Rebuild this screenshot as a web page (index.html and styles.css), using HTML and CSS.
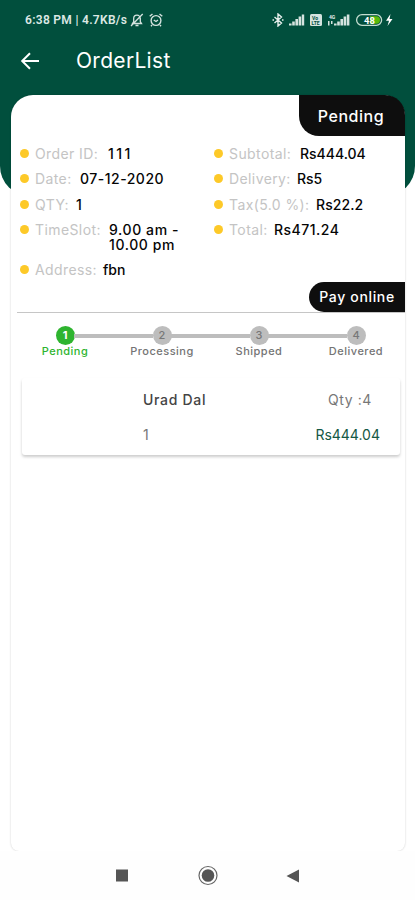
FILE: index.html
```html
<!DOCTYPE html>
<html lang="en">
<head>
<meta charset="utf-8">
<title>OrderList</title>
<link rel="stylesheet" href="styles.css">
</head>
<body>
<div class="screen">
  <header class="header">
    <div class="status">
      <span class="status-text">6:38 PM | 4.7KB/s</span>
      <svg class="ic-mute" width="14" height="14" viewBox="0 0 14 14" fill="none" stroke="#d5e3df" stroke-width="1.300"><path d="M2.5 10.500h9L10.300 8.700V5.500a3.300 3.300 0 0 0-6.600 0v3.200zM5.500 12.500h3M12.700 1 1 13"/></svg>
      <svg class="ic-alarm" width="14" height="14" viewBox="0 0 14 14" fill="none" stroke="#d5e3df" stroke-width="1.400"><circle cx="7" cy="7.500" r="4.900"/><path d="M.7 3.300 3.500 1M13.300 3.300 10.500 1M4.800 7 7 8.500 9 7M3 12l-1 1.300M11 12l1 1.300"/></svg>
      <svg class="ic-system" width="124" height="14" viewBox="0 0 124 14">
        <path d="M2.500 4l7 6-3.500 3V1l3.500 3-7 6M.5 7h1.500M10 7h1.500" fill="none" stroke="#e6efec" stroke-width="1.400"/>
        <g fill="#d5e3df"><path d="M17 10.500h2.600v2H17zM20.200 8.500h2.600v4h-2.600zM23.400 6h2.600v6.500h-2.600zM26.600 3.500h2.600v9h-2.600zM29.800 1.500h2.400v11h-2.400z"/><rect x="38" y="1" width="12" height="12" rx="1.500"/><path d="M62 10.500h2.600v2H62zM65.200 8.500h2.600v4h-2.600zM68.400 6H71v6.500h-2.600zM71.600 3.500h2.600v9h-2.600zM74.800 1.500h2.600v11h-2.600zM56 8h1.500v4.500H56zM59 8h1.500v3H59z"/></g>
        <text x="40" y="6.500" class="micro dark">Vo</text><text x="39.500" y="11.800" class="micro dark">LTE</text>
        <text x="57" y="5.500" class="micro light">4G</text>
        <rect x="84.600" y="1.600" width="25" height="10.800" rx="5.400" fill="none" stroke="#c3dccf" stroke-width="1.300"/>
        <path d="M98 3.300h6.300a3.700 3.700 0 0 1 0 7.400H98z" fill="#58b90a"/>
        <text x="92" y="10.500" class="battery">48</text>
        <path d="M118.500 1 114 7.700h3L115.500 13l5-7h-3z" fill="#fff"/>
      </svg>
    </div>
    <div class="appbar">
      <svg width="20" height="18" viewBox="0 0 20 18" fill="none" stroke="#fff" stroke-width="2"><path d="M10 1.200 2.200 9l7.800 7.800M2.200 9H19"/></svg>
      <h1>OrderList</h1>
    </div>
  </header>

  <main class="card">
    <div class="badge"><span>Pending</span></div>
    <section class="details">
      <ul>
        <li><i></i><span class="label l-id">Order ID:</span><b class="v-id">111</b></li>
        <li><i></i><span class="label l-date">Date:</span><b class="v-date">07-12-2020</b></li>
        <li><i></i><span class="label l-qty">QTY:</span><b>1</b></li>
        <li class="two"><i></i><span class="label l-slot">TimeSlot:</span><b class="v-slot"><span>9.00 am -</span><span>10.00 pm</span></b></li>
        <li><i></i><span class="label l-address">Address:</span><b class="v-address">fbn</b></li>
      </ul>
      <ul>
        <li><i></i><span class="label l-sub">Subtotal:</span><b class="v-sub">Rs444.04</b></li>
        <li><i></i><span class="label l-del">Delivery:</span><b class="v-del">Rs5</b></li>
        <li><i></i><span class="label l-tax">Tax(5.0 %):</span><b class="v-tax">Rs22.2</b></li>
        <li><i></i><span class="label l-total">Total:</span><b class="v-total">Rs471.24</b></li>
      </ul>
    </section>
    <div class="payment"><span class="pay">Pay online</span></div>
    <ol class="steps">
      <li class="active"><em>1</em><span class="s1">Pending</span></li>
      <li><em>2</em><span class="s2">Processing</span></li>
      <li><em>3</em><span class="s3">Shipped</span></li>
      <li><em>4</em><span class="s4">Delivered</span></li>
    </ol>
    <article class="item">
      <span class="name">Urad Dal</span><span class="qty">Qty :4</span>
      <span class="count">1</span><span class="price">Rs444.04</span>
    </article>
  </main>

  <nav class="nav">
    <svg width="415" height="49" viewBox="0 0 415 49"><path d="M116 18.500h12v12h-12zM299 18.500v13l-12.500-6.500z" fill="#555"/><circle cx="208" cy="24.500" r="9" fill="none" stroke="#666" stroke-width="1.200"/><circle cx="208" cy="24.500" r="6.300" fill="#555"/></svg>
  </nav>
</div>
</body>
</html>
```
FILE: styles.css
```css
* { box-sizing: border-box; }
body { margin: 0; background: #fff; font-family: Inter, "Liberation Sans", sans-serif; }
ul, ol { list-style: none; margin: 0; padding: 0; }
.screen { width: 415px; height: 900px; overflow: hidden; display: flex; flex-direction: column; }
.header { height: 196px; flex: none; background: #014f3d; border-radius: 0 0 30px 30px; }
.status { height: 40px; padding: 0 19px 0 25px; display: flex; align-items: center; }
.status-text { font: 600 12px/14px Roboto, sans-serif; letter-spacing: .3px; color: #dce8e4; width: 105px; white-space: nowrap; }
.ic-alarm { margin-left: 5px; }
.ic-system { margin-left: auto; }
.micro { font: 700 5px Roboto, sans-serif; }
.dark { fill: #014f3d; }
.light { fill: #e3edea; }
.battery { font: 700 9.500px Roboto, sans-serif; fill: #fff; }
.appbar { height: 42px; padding-left: 20px; display: flex; align-items: center; }
.appbar h1 { margin: 0 0 0 36px; font-size: 21px; font-weight: 400; line-height: 24px; letter-spacing: .3px; color: #fff; }
.card { width: 394px; height: 756px; flex: none; margin: -101px 0 0 11px; background: #fff; border-radius: 22px 22px 8px 8px; box-shadow: 0 0 2px rgba(0,0,0,.22); clip-path: inset(-3px -3px 0 -3px); }
.badge { width: 106px; height: 41px; margin-left: auto; padding-right: 2px; border-radius: 0 20px 0 20px; background: #0e0e0e; color: #fff; font-size: 16px; font-weight: 500; letter-spacing: .55px; line-height: 42px; text-align: center; }
.details { display: grid; grid-template-columns: 194px 1fr; padding: 5px 0 0 9px; height: 146px; }
.details li { height: 25.300px; display: flex; align-items: flex-start; font-size: 14px; line-height: 25px; white-space: nowrap; }
.details li.two { height: 40.500px; }
.details i { width: 9px; height: 9px; margin: 8px 6px 0 0; border-radius: 50%; background: #fdc928; }
.label { color: #c4c4c4; font-weight: 400; flex: none; letter-spacing: .4px; }
.details b { font-weight: 500; color: #050505; }
.details .v-slot { line-height: 15px; padding-top: 5px; letter-spacing: .6px; }
.v-slot span { display: block; height: 15px; line-height: 15px; }
.details .v-id { letter-spacing: 2.400px; }
.details .v-date { letter-spacing: .5px; }
.details .v-tax { letter-spacing: .1px; }
.details .v-total { letter-spacing: .5px; }
.l-id { width: 73px; } .l-date { width: 45px; } .l-qty { width: 41px; } .l-slot { width: 74px; } .l-address { width: 68px; }
.l-sub { width: 71px; } .l-del { width: 68px; } .l-tax { width: 87px; } .l-total { width: 45px; }
.payment { height: 31px; margin-left: 6px; border-bottom: 1px solid #c6c6c6; display: flex; justify-content: flex-end; }
.pay { width: 96px; height: 30px; border-radius: 15px 0 0 15px; background: #0e0e0e; color: #fff; font-size: 14px; font-weight: 500; letter-spacing: .65px; line-height: 30px; text-align: center; }
.steps { display: grid; grid-template-columns: repeat(4, 97px); margin: 13px 0 0 5.500px; height: 38px; }
.steps li { display: flex; flex-direction: column; align-items: center; font-size: 11px; font-weight: 500; letter-spacing: .5px; line-height: 13px; color: #747474; position: relative; }
.steps li + li::before { content: ""; position: absolute; width: 79px; height: 4px; left: -40px; top: 8px; background: #bdbdbd; }
.steps em { width: 19px; height: 19px; border-radius: 50%; background: #bdbdbd; font-style: normal; line-height: 19px; letter-spacing: 0; font-size: 11px; text-align: center; color: #777; }
.steps .active { color: #2eb42f; }
.steps .active em { background: #2eb42f; color: #fff; font-weight: 700; }
.item { width: 378px; height: 77px; margin: 14px 0 0 11px; border-radius: 3px; background: #fff; box-shadow: 0 2px 3px rgba(0,0,0,.2); display: grid; grid-template: 35px 34px / 121px 1fr 1fr; padding-top: 4px; align-items: center; font-size: 14px; color: #444; }
.name { grid-column: 2; font-weight: 500; letter-spacing: .7px; }
.qty { grid-column: 3; justify-self: end; margin-right: 28px; color: #777; letter-spacing: .6px; }
.count { grid-column: 2; color: #777; }
.price { grid-column: 3; justify-self: end; margin-right: 20px; color: #145844; }
.nav { height: 49px; flex: none; background: #fefefe; }
.nav svg { display: block; }
```
